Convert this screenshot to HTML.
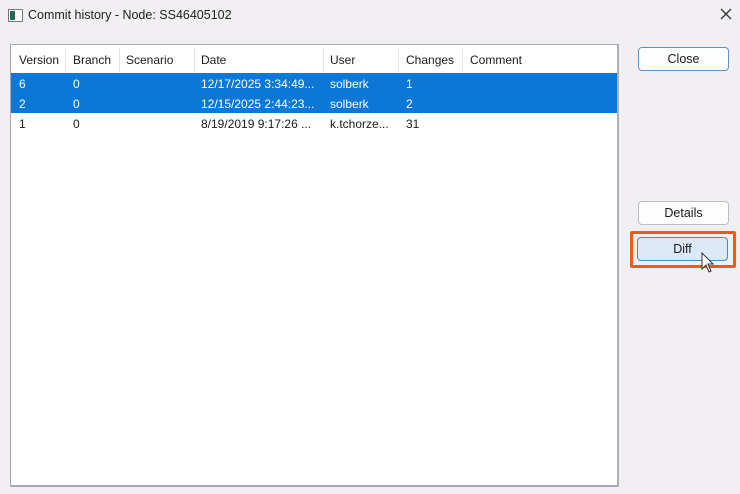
<!DOCTYPE html>
<html><head><style>
body{margin:0;width:740px;height:494px;background:#f1eff2;font-family:"Liberation Sans",sans-serif;font-size:12px;color:#1a1a1a;position:relative;overflow:hidden}
.a{position:absolute}
.title{left:28px;top:8px;font-size:12.5px;color:#222}
.list{left:10px;top:44px;width:606px;height:440px;background:#fff;border:1px solid #a9a8b0;border-bottom:2px solid #a9a8b0;border-right:2px solid #b0afb6}
.hd{top:48px;height:24px;line-height:24px}
.sep{top:48px;width:1px;height:24px;background:#e2e2e6}
.sel{left:11px;top:73px;width:606px;height:40px;background:#0b78d7}
.c{height:20px;line-height:20px}
.w{color:#fff}
.btn{width:89px;height:22px;border:1px solid #bdbcc3;border-radius:4px;background:#fdfdfe;text-align:center;line-height:22px;font-size:12.5px}
</style></head><body>
<div class="a" style="left:8px;top:9px;width:13px;height:11px;border:1px solid #777;background:#fff"><div style="position:absolute;left:1px;top:1px;width:5px;height:9px;background:#1f6e5a"></div></div>
<div class="a title">Commit history - Node: SS46405102</div>
<svg class="a" style="left:720px;top:8px" width="12" height="12" viewBox="0 0 12 12"><path d="M1 1 L11 11 M11 1 L1 11" stroke="#333" stroke-width="1.3"/></svg>
<div class="a list"></div>
<div class="a sel"></div>
<div class="a hd" style="left:19px">Version</div>
<div class="a hd" style="left:73px">Branch</div>
<div class="a hd" style="left:126px">Scenario</div>
<div class="a hd" style="left:201px">Date</div>
<div class="a hd" style="left:330px">User</div>
<div class="a hd" style="left:406px">Changes</div>
<div class="a hd" style="left:470px">Comment</div>
<div class="a sep" style="left:65px"></div><div class="a sep" style="left:119px"></div><div class="a sep" style="left:194px"></div><div class="a sep" style="left:323px"></div><div class="a sep" style="left:398px"></div><div class="a sep" style="left:462px"></div>
<div class="a c w" style="top:74px;left:19px">6</div><div class="a c w" style="top:74px;left:73px">0</div><div class="a c w" style="top:74px;left:201px">12/17/2025 3:34:49...</div><div class="a c w" style="top:74px;left:330px">solberk</div><div class="a c w" style="top:74px;left:406px">1</div>
<div class="a c w" style="top:94px;left:19px">2</div><div class="a c w" style="top:94px;left:73px">0</div><div class="a c w" style="top:94px;left:201px">12/15/2025 2:44:23...</div><div class="a c w" style="top:94px;left:330px">solberk</div><div class="a c w" style="top:94px;left:406px">2</div>
<div class="a c" style="top:114px;left:19px">1</div><div class="a c" style="top:114px;left:73px">0</div><div class="a c" style="top:114px;left:201px">8/19/2019 9:17:26 ...</div><div class="a c" style="top:114px;left:330px">k.tchorze...</div><div class="a c" style="top:114px;left:406px">31</div>
<div class="a btn" style="left:638px;top:47px;border-color:#5a93c8">Close</div>
<div class="a btn" style="left:638px;top:201px">Details</div>
<div class="a" style="left:630px;top:231px;width:100px;height:31px;border:3px solid #f05a16;border-radius:2px"></div>
<div class="a btn" style="left:637px;top:237px;background:#dbe9f8;border-color:#4b8ac6">Diff</div>
<svg class="a" style="left:700px;top:252px" width="16" height="22" viewBox="0 0 16 22"><path d="M2 1 L2 17 L6 13 L9 20 L11 19 L8 12 L13 12 Z" fill="#fff" stroke="#333" stroke-width="1"/></svg>
</body></html>
